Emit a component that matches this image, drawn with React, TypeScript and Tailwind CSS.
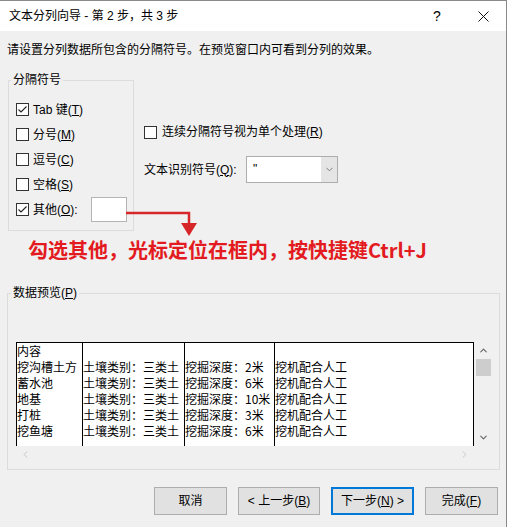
import React from 'react';
import { ChevronDown, ChevronLeft, ChevronRight, ChevronUp } from 'lucide-react';

const rows = [
  ['内容', '', '', ''],
  ['挖沟槽土方', '土壤类别：三类土', '挖掘深度：2米', '挖机配合人工'],
  ['蓄水池', '土壤类别：三类土', '挖掘深度：6米', '挖机配合人工'],
  ['地基', '土壤类别：三类土', '挖掘深度：10米', '挖机配合人工'],
  ['打桩', '土壤类别：三类土', '挖掘深度：3米', '挖机配合人工'],
  ['挖鱼塘', '土壤类别：三类土', '挖掘深度：6米', '挖机配合人工'],
];

function CheckBox({ checked }: { checked?: boolean }) {
  return (
    <span className="flex h-[13px] w-[13px] shrink-0 items-center justify-center border border-[#333333] bg-white">
      {checked && (
        <svg width="11" height="11" viewBox="0 0 11 11">
          <polyline points="1.5,5.5 4,8 9.5,2.5" fill="none" stroke="#222" strokeWidth="1.1" />
        </svg>
      )}
    </span>
  );
}

// label text with an underlined access key, e.g. Tab 键(T)
function Label({ text, hotkey, suffix = '' }: { text: string; hotkey: string; suffix?: string }) {
  return (
    <span>
      {text}(<span className="underline underline-offset-1">{hotkey}</span>){suffix}
    </span>
  );
}

function Option({ checked, text, hotkey }: { checked?: boolean; text: string; hotkey: string }) {
  return (
    <div className="flex h-[25px] items-center gap-[4px]">
      <CheckBox checked={checked} />
      <Label text={text} hotkey={hotkey} />
    </div>
  );
}

function Column({ index, className }: { index: number; className: string }) {
  return (
    <div className={className}>
      {rows.map((r, i) => (
        <div key={i} className="h-[16px] whitespace-nowrap leading-[16px]">
          {r[index]}
        </div>
      ))}
    </div>
  );
}

export default function App() {
  return (
    <div className="relative h-[527px] w-[507px] overflow-hidden border-t border-r border-[#8a8a8a] bg-[#f0f0f0] font-['Liberation_Sans','Noto_Sans_CJK_SC',sans-serif] text-[12px] leading-[16px] text-black">
      {/* title bar */}
      <div className="flex h-[30px] items-center bg-white pl-[9px]">
        <span>文本分列向导 - 第 2 步，共 3 步</span>
        <div className="ml-auto flex h-full">
          <div className="flex w-[46px] items-center justify-center text-[14px] font-light">?</div>
          <div className="flex w-[46px] items-center justify-center">
            <svg width="11" height="11" viewBox="0 0 11 11">
              <path d="M0.5 0.5 L10.5 10.5 M10.5 0.5 L0.5 10.5" stroke="#111" strokeWidth="1" />
            </svg>
          </div>
        </div>
      </div>

      <div className="px-[7px]">
        <p className="mt-[11px]">请设置分列数据所包含的分隔符号。在预览窗口内可看到分列的效果。</p>

        <div className="mt-[14px] flex">
          <fieldset className="ml-[1px] w-[126px] border border-[#dcdcdc]">
            <legend className="ml-[2px] px-[2px]">分隔符号</legend>
            <div className="flex flex-col pt-[9px] pr-[6px] pb-[8px] pl-[7px]">
              <Option checked text="Tab 键" hotkey="T" />
              <Option text="分号" hotkey="M" />
              <Option text="逗号" hotkey="C" />
              <Option text="空格" hotkey="S" />
              <div className="flex h-[25px] items-center gap-[4px]">
                <CheckBox checked />
                <Label text="其他" hotkey="O" suffix=":" />
                <div className="ml-auto h-[25px] w-[36px] border border-[#b4b4b4] bg-white" />
              </div>
            </div>
          </fieldset>

          <div className="ml-[10px] flex flex-col pt-[52px]">
            <div className="flex h-[16px] items-center gap-[5px]">
              <CheckBox />
              <Label text="连续分隔符号视为单个处理" hotkey="R" />
            </div>
            <div className="mt-[16px] flex items-center">
              <span className="w-[102px]">
                <Label text="文本识别符号" hotkey="Q" suffix=":" />
              </span>
              <div className="flex h-[27px] w-[92px] border border-[#adadad] bg-white">
                <span className="flex-1 pl-[6px] leading-[25px]">"</span>
                <span className="flex w-[16px] items-center justify-center bg-[#e5e5e5]">
                  <ChevronDown size={11} strokeWidth={1.5} color="#555" />
                </span>
              </div>
            </div>
          </div>
        </div>

        <p className="mt-[9px] ml-[21px] font-['Noto_Sans_CJK_SC',sans-serif] text-[20px] leading-[20px] font-bold text-[#e31b20]">
          勾选其他，光标定位在框内，按快捷键Ctrl+J
        </p>

        <fieldset className="mt-[25px] border border-[#dcdcdc]">
          <legend className="ml-[3px] px-[2px]">
            <Label text="数据预览" hotkey="P" />
          </legend>
          <div className="flex pt-[41px] pr-[7px] pb-[6px] pl-[8px]">
            <div className="flex w-[458px] flex-col">
              <div className="flex h-[104px] border-t border-r border-l border-black bg-white font-['Noto_Sans_CJK_SC',sans-serif]">
                <Column index={0} className="w-[65px]" />
                <Column index={1} className="w-[102px] border-l border-black" />
                <Column index={2} className="w-[90px] border-l border-black" />
                <Column index={3} className="flex-1 border-l border-black" />
              </div>
              <div className="flex h-[17px] items-center justify-between px-[4px]">
                <ChevronLeft size={11} strokeWidth={2} color="#c2c2c2" />
                <ChevronRight size={11} strokeWidth={2} color="#c2c2c2" />
              </div>
            </div>
            <div className="flex w-[18px] flex-col">
              <div className="flex h-[104px] flex-col items-center">
                <div className="flex h-[17px] items-center justify-center">
                  <ChevronUp size={11} strokeWidth={2.2} color="#606060" />
                </div>
                <div className="h-[17px] w-[15px] bg-[#cdcdcd]" />
                <div className="mt-auto flex h-[17px] items-center justify-center">
                  <ChevronDown size={11} strokeWidth={2.2} color="#606060" />
                </div>
              </div>
            </div>
          </div>
        </fieldset>

        <div className="mt-[17px] flex justify-end gap-[11px] pr-[1px]">
          <button className="h-[28px] w-[73px] border border-[#adadad] bg-[#e1e1e1]">取消</button>
          <button className="h-[28px] w-[82px] border border-[#adadad] bg-[#e1e1e1]">
            &lt; <Label text="上一步" hotkey="B" />
          </button>
          <button className="h-[28px] w-[83px] border-2 border-[#0078d7] bg-[#e1e1e1]">
            <Label text="下一步" hotkey="N" /> &gt;
          </button>
          <button className="h-[28px] w-[73px] border border-[#adadad] bg-[#e1e1e1]">
            <Label text="完成" hotkey="F" />
          </button>
        </div>
      </div>

      {/* red callout arrow from the 其他 field down to the note */}
      <svg className="absolute top-[204px] left-[125px]" width="76" height="34" viewBox="0 0 76 34">
        <polyline points="1,8 64,8 64,20" fill="none" stroke="#d7262a" strokeWidth="2.5" />
        <polygon points="56,18 72,18 64,31" fill="#d7262a" />
      </svg>
    </div>
  );
}
